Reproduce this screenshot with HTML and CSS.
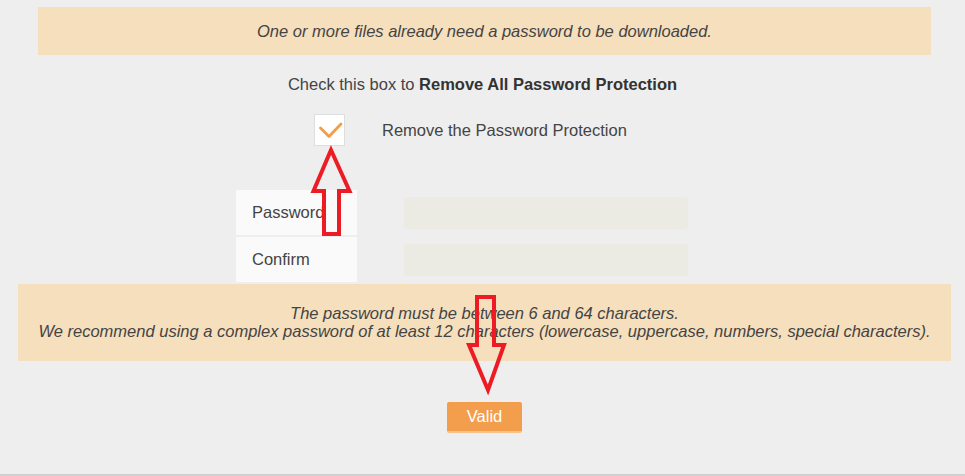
FILE: index.html
```html
<!DOCTYPE html>
<html>
<head>
<meta charset="utf-8">
<link rel="stylesheet" href="styles.css">
</head>
<body>
<div class="page">
  <div class="notice notice-top"><em>One or more files already need a password to be downloaded.</em></div>
  <div class="check-title">Check this box to <strong>Remove All Password Protection</strong></div>
  <div class="check-row">
    <span class="checkbox">
      <svg width="31" height="32" viewBox="0 0 31 32"><path d="M6.5 14 L15 22.5 L27 10" fill="none" stroke="#f39d4b" stroke-width="2.8" stroke-linecap="round" stroke-linejoin="round"/></svg>
    </span>
    <span class="check-label">Remove the Password Protection</span>
  </div>
  <div class="form">
    <div class="form-row">
      <div class="field-label">Password</div>
      <div class="field-input"></div>
    </div>
    <div class="form-row">
      <div class="field-label">Confirm</div>
      <div class="field-input"></div>
    </div>
  </div>
  <div class="notice notice-rules"><em>The password must be between 6 and 64 characters.<br>We recommend using a complex password of at least 12 characters (lowercase, uppercase, numbers, special characters).</em></div>
  <div class="actions"><button class="btn-valid">Valid</button></div>
  <svg class="annotations" width="965" height="476" viewBox="0 0 965 476">
    <path d="M331 150 L349.5 191 L339 191 L339 234 L324 234 L324 191 L313.5 191 Z" fill="none" stroke="#ed1c24" stroke-width="4" stroke-linejoin="miter"/>
    <path d="M477 297 L494 297 L494 345 L504 345 L488 390 L469 345 L477 345 Z" fill="none" stroke="#ed1c24" stroke-width="4" stroke-linejoin="miter"/>
  </svg>
</div>
</body>
</html>
```

FILE: styles.css
```css
html, body {
  margin: 0;
  padding: 0;
}
body {
  background: #eeeeee;
  font-family: "Liberation Sans", Arial, sans-serif;
  color: #444;
}
.page {
  position: relative;
  height: 476px;
  border-bottom: 2px solid #cfcfcf;
  padding-top: 7px;
  box-sizing: border-box;
  overflow: hidden;
}
.notice {
  background: #f6dfbd;
  text-align: center;
  font-size: 16.5px;
  color: #444;
}
.notice em {
  font-style: italic;
}
.notice-top {
  margin: 0 34px 0 38px;
  height: 48px;
  line-height: 48px;
}
.check-title {
  margin-top: 19px;
  text-align: center;
  font-size: 16.5px;
  line-height: 20px;
}
.check-title strong {
  font-weight: bold;
  color: #333;
}
.check-row {
  display: flex;
  align-items: center;
  margin: 20px 0 0 314px;
  height: 32px;
}
.checkbox {
  display: block;
  width: 29px;
  height: 30px;
  background: #fff;
  border: 1px solid #dedede;
}
.checkbox svg {
  display: block;
  margin: -1px;
}
.check-label {
  margin-left: 37px;
  font-size: 16.5px;
  margin-top: 1px;
}
.form {
  margin: 44px 0 0 236px;
  display: flex;
  flex-direction: column;
  gap: 2px;
}
.form-row {
  display: flex;
  align-items: center;
  height: 45px;
}
.field-label {
  width: 105px;
  height: 45px;
  padding-left: 16px;
  background: #fafafa;
  line-height: 45px;
  font-size: 16.5px;
}
.field-input {
  margin-left: 47px;
  width: 284px;
  height: 32px;
  background: #ebeae3;
  border-radius: 4px;
}
.notice-rules {
  margin: 2px 14px 0 18px;
  height: 77px;
  box-sizing: border-box;
  padding-top: 20px;
  line-height: 18px;
}
.actions {
  display: flex;
  justify-content: center;
  padding-left: 4px;
  margin-top: 41px;
}
.btn-valid {
  width: 75px;
  height: 31px;
  padding: 0;
  border: none;
  border-bottom: 2px solid #f6c28c;
  border-radius: 2px;
  background: #f29e4c;
  color: #fff;
  font-family: "Liberation Sans", Arial, sans-serif;
  font-size: 16.5px;
  line-height: 29px;
}
.annotations {
  position: absolute;
  left: 0;
  top: 0;
  pointer-events: none;
}
```
